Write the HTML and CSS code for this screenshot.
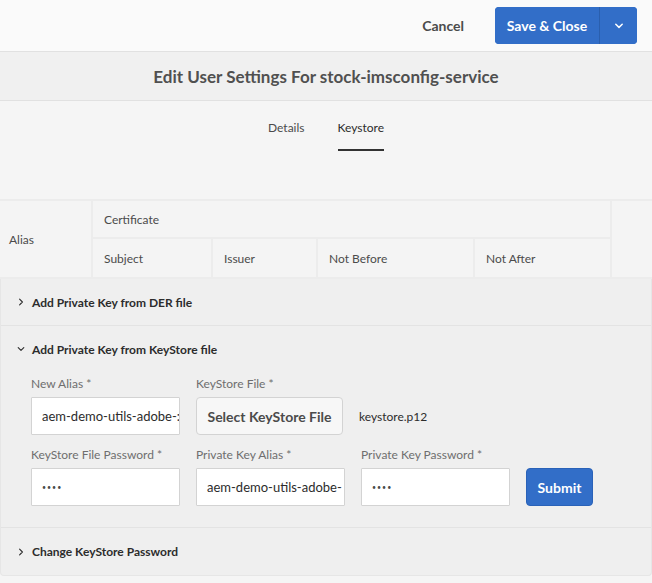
FILE: index.html
```html
<!DOCTYPE html>
<html>
<head>
<meta charset="utf-8">
<link rel="stylesheet" href="styles.css">
</head>
<body>
<header class="topbar">
  <button class="btn-quiet">Cancel</button>
  <div class="split">
    <button class="split-main">Save &amp; Close</button>
    <button class="split-toggle" aria-label="More">
      <svg width="10" height="6" viewBox="0 0 10 6"><path d="M1.8 1.3 L5 4.4 L8.2 1.3" fill="none" stroke="#fff" stroke-width="1.5" stroke-linecap="round" stroke-linejoin="round"/></svg>
    </button>
  </div>
</header>
<div class="titlebar">Edit User Settings For stock-imsconfig-service</div>
<main class="content">
  <nav class="tabs">
    <span class="tab">Details</span>
    <span class="tab active">Keystore</span>
  </nav>
  <table class="certs">
    <colgroup>
      <col class="w-alias">
      <col class="w-subj">
      <col class="w-iss">
      <col class="w-nb">
      <col class="w-na">
      <col>
    </colgroup>
    <thead>
      <tr class="r1">
        <th rowspan="2" class="c-alias">Alias</th>
        <th colspan="4">Certificate</th>
        <th rowspan="2" class="c-end"></th>
      </tr>
      <tr class="r2">
        <th>Subject</th>
        <th>Issuer</th>
        <th>Not Before</th>
        <th>Not After</th>
      </tr>
    </thead>
  </table>
  <section class="accordion">
    <div class="acc-item">
      <div class="acc-head">
        <svg class="chev" width="8" height="8" viewBox="0 0 8 8"><path d="M2.6 1.2 L5.4 4 L2.6 6.8" fill="none" stroke="#2c2c2c" stroke-width="1.1" stroke-linecap="round" stroke-linejoin="round"/></svg>
        <span>Add Private Key from DER file</span>
      </div>
    </div>
    <div class="acc-item open">
      <div class="acc-head">
        <svg class="chev" width="8" height="8" viewBox="0 0 8 8"><path d="M1.2 2.6 L4 5.4 L6.8 2.6" fill="none" stroke="#2c2c2c" stroke-width="1.1" stroke-linecap="round" stroke-linejoin="round"/></svg>
        <span>Add Private Key from KeyStore file</span>
      </div>
      <div class="acc-body">
        <div class="row">
          <label class="field">
            <span class="lbl">New Alias *</span>
            <span class="input">aem-demo-utils-adobe-:</span>
          </label>
          <div class="field">
            <span class="lbl">KeyStore File *</span>
            <button class="file-btn">Select KeyStore File</button>
          </div>
          <span class="filename">keystore.p12</span>
        </div>
        <div class="row">
          <label class="field">
            <span class="lbl">KeyStore File Password *</span>
            <span class="input pw">••••</span>
          </label>
          <label class="field">
            <span class="lbl">Private Key Alias *</span>
            <span class="input">aem-demo-utils-adobe-</span>
          </label>
          <label class="field">
            <span class="lbl">Private Key Password *</span>
            <span class="input pw">••••</span>
          </label>
          <button class="submit">Submit</button>
        </div>
      </div>
    </div>
    <div class="acc-item">
      <div class="acc-head">
        <svg class="chev" width="8" height="8" viewBox="0 0 8 8"><path d="M2.6 1.2 L5.4 4 L2.6 6.8" fill="none" stroke="#2c2c2c" stroke-width="1.1" stroke-linecap="round" stroke-linejoin="round"/></svg>
        <span>Change KeyStore Password</span>
      </div>
    </div>
  </section>
</main>
</body>
</html>
```
FILE: styles.css
```css
* { box-sizing: border-box; }
html, body { margin: 0; padding: 0; }
body {
  font-family: Lato, "Noto Sans", sans-serif;
  background: #f5f5f5;
  color: #2c2c2c;
  width: 652px;
  height: 583px;
  overflow: hidden;
}
button { font-family: inherit; cursor: pointer; }

.topbar {
  height: 52px;
  background: #fafafa;
  border-bottom: 1px solid #e1e1e1;
  display: flex;
  align-items: center;
  justify-content: flex-end;
  padding: 0 15px 0 0;
}
.btn-quiet {
  border: 0;
  background: transparent;
  font-size: 14px;
  font-weight: 700;
  color: #4b4b4b;
  padding: 0;
  margin-right: 31px;
}
.split {
  display: flex;
  height: 37px;
  border-radius: 4px;
  overflow: hidden;
  background: #326ec8;
}
.split-main {
  border: 0;
  background: #326ec8;
  color: #fff;
  font-size: 14px;
  font-weight: 700;
  width: 104px;
  padding: 0;
}
.split-toggle {
  border: 0;
  border-left: 1px solid #2a5fae;
  background: #326ec8;
  width: 38px;
  padding: 0;
  display: flex;
  align-items: center;
  justify-content: center;
}

.titlebar {
  height: 49px;
  background: #f0f0f0;
  border-bottom: 1px solid #e1e1e1;
  display: flex;
  align-items: center;
  justify-content: center;
  font-size: 17px;
  font-weight: 700;
  color: #505050;
}

.content { background: #f5f5f5; }
.tabs {
  display: flex;
  justify-content: center;
  gap: 33px;
  padding-top: 19px;
  height: 98px;
}
.tab {
  font-size: 12px;
  color: #4b4b4b;
  height: 31px;
}
.tab.active {
  color: #2c2c2c;
  border-bottom: 2px solid #323232;
}

.certs {
  width: 100%;
  border-collapse: collapse;
  table-layout: fixed;
  background: #f4f4f4;
}
.w-alias { width: 92px; }
.w-subj { width: 120px; }
.w-iss { width: 105px; }
.w-nb { width: 157px; }
.w-na { width: 137px; }
.certs th {
  font-size: 12px;
  font-weight: 400;
  color: #4b4b4b;
  text-align: left;
  padding: 0 0 0 11px;
  border: 2px solid #ececec;
}
.certs tr.r1 th { height: 38px; }
.certs tr.r2 th { height: 40px; }
.certs th.c-alias { padding-left: 9px; border-left: 0; }
.certs th.c-end { border-right: 0; }

.accordion {
  background: #efefef;
  border: 1px solid #e6e6e6;
  border-top: 0;
  border-radius: 0 0 4px 4px;
}
.acc-item { border-bottom: 1px solid #e3e3e3; }
.acc-item:last-child { border-bottom: 0; }
.acc-head {
  display: flex;
  align-items: center;
  height: 46px;
  padding-left: 16px;
  font-size: 12px;
  font-weight: 700;
  color: #2c2c2c;
}
.acc-item:last-child .acc-head { height: 47px; }
.chev { margin-right: 7px; }
.acc-body { padding: 5px 0 21px 30px; }
.row {
  display: flex;
  align-items: flex-end;
  gap: 16px;
  margin-bottom: 13px;
}
.row:last-child { margin-bottom: 0; }
.field { display: flex; flex-direction: column; }
.lbl {
  font-size: 12px;
  color: #6e6e6e;
  height: 20px;
  line-height: 14px;
}
.input {
  width: 149px;
  height: 38px;
  background: #fff;
  border: 1px solid #d3d3d3;
  border-radius: 1px;
  font-size: 13px;
  color: #2c2c2c;
  display: flex;
  align-items: center;
  padding-left: 10px;
  white-space: nowrap;
  overflow: hidden;
}
.input.pw { font-size: 7px; letter-spacing: 1px; color: #4b4b4b; }
.file-btn {
  width: 147px;
  height: 38px;
  border: 1px solid #d3d3d3;
  border-radius: 4px;
  background: #f7f7f7;
  font-size: 14px;
  font-weight: 700;
  color: #4b4b4b;
  padding: 0;
}
.filename {
  font-size: 12px;
  color: #2c2c2c;
  height: 38px;
  display: flex;
  align-items: center;
}
.submit {
  width: 67px;
  height: 38px;
  border: 1px solid #2a62b8;
  border-radius: 4px;
  background: #326ec8;
  color: #fff;
  font-size: 14px;
  font-weight: 700;
  padding: 0;
}
```
